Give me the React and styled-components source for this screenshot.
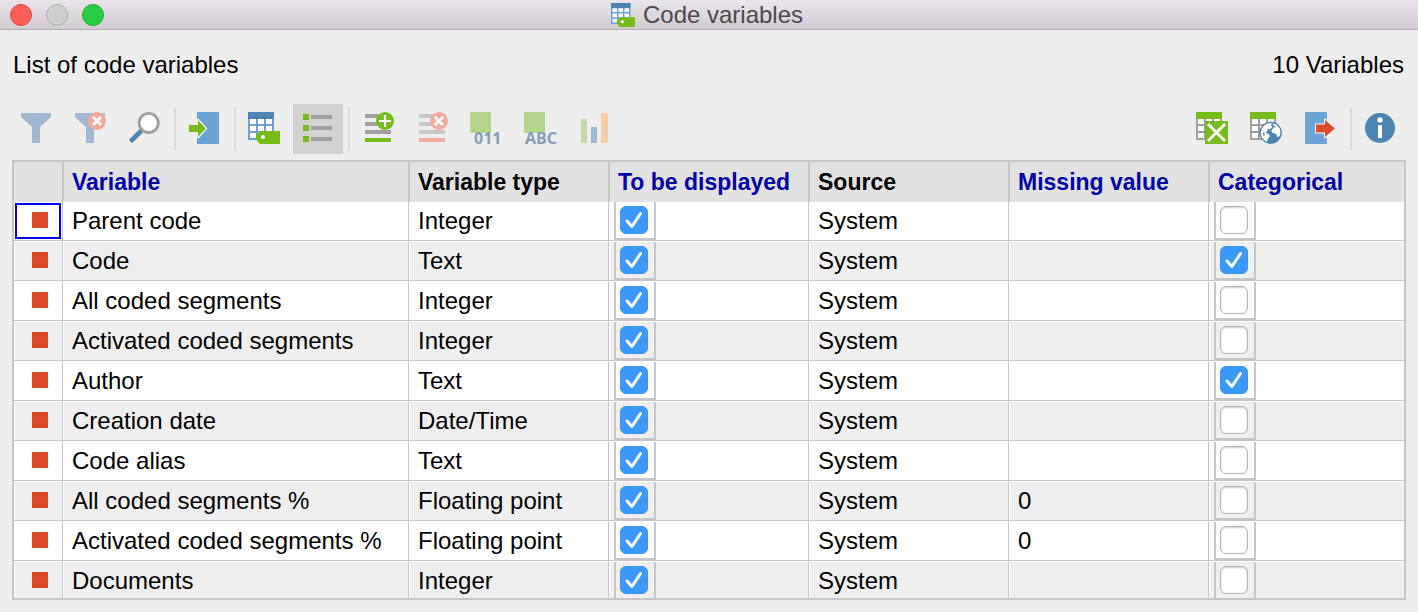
import React, { useState } from 'react'
import styled, { createGlobalStyle } from 'styled-components'

const columns = [
  { label: 'Variable', editable: true, width: 346 },
  { label: 'Variable type', width: 200 },
  { label: 'To be displayed', editable: true, width: 200 },
  { label: 'Source', width: 200 },
  { label: 'Missing value', editable: true, width: 200 },
  { label: 'Categorical', editable: true },
]

const initialRows = [
  { name: 'Parent code', type: 'Integer', displayed: true, missing: '', categorical: false },
  { name: 'Code', type: 'Text', displayed: true, missing: '', categorical: true },
  { name: 'All coded segments', type: 'Integer', displayed: true, missing: '', categorical: false },
  { name: 'Activated coded segments', type: 'Integer', displayed: true, missing: '', categorical: false },
  { name: 'Author', type: 'Text', displayed: true, missing: '', categorical: true },
  { name: 'Creation date', type: 'Date/Time', displayed: true, missing: '', categorical: false },
  { name: 'Code alias', type: 'Text', displayed: true, missing: '', categorical: false },
  { name: 'All coded segments %', type: 'Floating point', displayed: true, missing: '0', categorical: false },
  { name: 'Activated coded segments %', type: 'Floating point', displayed: true, missing: '0', categorical: false },
  { name: 'Documents', type: 'Integer', displayed: true, missing: '', categorical: false },
]

// the icons below are built at load time, so this one has to come first
const IconText = styled.text`
  font-family: "Open Sans", "Noto Sans", sans-serif;
  font-size: 16px;
  font-weight: 700;
  fill: #859fb8;
`

const cellX = [11, 19, 27]
const cellY = [15, 22, 29]

function Grid({ head, frame }) {
  return (
    <g>
      <rect x="9" y="8" width="26" height="28" fill={frame} />
      <rect x="9" y="8" width="26" height="7" fill={head} />
      {cellY.map((y) =>
        cellX.map((x) => <rect key={x + '-' + y} x={x} y={y} width="6" height="5" fill="#fff" />)
      )}
    </g>
  )
}

function TagTable() {
  return (
    <g>
      <Grid head="#4e84b2" frame="#6da2d6" />
      <path d="M21 27H41V40H21L18 37V36L17 35V32L18 30Z" fill="#77bc1b" />
      <circle cx="24" cy="33" r="2.1" fill="#fff" />
    </g>
  )
}

function RemoveBadge() {
  return (
    <g>
      <circle cx="32" cy="17" r="9" fill="#f2aa9c" />
      <path d="M28 13L36 21M36 13L28 21" stroke="#fff" strokeWidth="2.8" />
    </g>
  )
}

const icons = {
  filter: <path d="M10 9H40V13L29 23V39H21V23L10 13Z" fill="#a0b9d1" />,
  filterOff: (
    <g>
      <path d="M10 9H40V13L29 23V39H21V23L10 13Z" fill="#a0b9d1" />
      <RemoveBadge />
    </g>
  ),
  search: (
    <g>
      <path d="M22.5 26.5L11.5 37.5" stroke="#4e84b2" strokeWidth="4.6" />
      <circle cx="29.7" cy="19" r="9.6" fill="#fff" stroke="#9f9f9f" strokeWidth="2.8" />
    </g>
  ),
  importData: (
    <g>
      <rect x="18" y="8" width="22" height="32" fill="#6da2d6" />
      <path d="M18 20V15L19.5 14.5L28.3 24.5L19.5 34.5L18 33.5V29Z" fill="#fff" />
      <path d="M10 21H19V16L26.8 24.5L19 33V28H10Z" fill="#77bc1b" />
    </g>
  ),
  tagTable: <TagTable />,
  list: (
    <g>
      {[10, 21, 32].map((y) => (
        <g key={y}>
          <rect x="10" y={y} width="6" height="6" fill="#77bc1b" />
          <rect x="18" y={y + 1} width="21" height="4" fill="#9f9f9f" />
        </g>
      ))}
    </g>
  ),
  addRow: (
    <g>
      <path d="M12 12H38M12 20H38M12 28H38" stroke="#9f9f9f" strokeWidth="4" />
      <path d="M12 36H38" stroke="#77bc1b" strokeWidth="4" />
      <circle cx="32" cy="17" r="9" fill="#77bc1b" />
      <path d="M26 17H38M32 11V23" stroke="#fff" strokeWidth="2.2" />
    </g>
  ),
  removeRow: (
    <g>
      <path d="M12 12H38M12 20H38M12 28H38" stroke="#c8c8c8" strokeWidth="4" />
      <path d="M12 36H38" stroke="#f2aa9c" strokeWidth="4" />
      <RemoveBadge />
    </g>
  ),
  number: (
    <g>
      <rect x="9" y="8" width="21" height="21" fill="#b4d58b" />
      <IconText x="13" y="40">011</IconText>
    </g>
  ),
  text: (
    <g>
      <rect x="9" y="8" width="21" height="21" fill="#b4d58b" />
      <IconText x="10" y="40">ABC</IconText>
    </g>
  ),
  chart: (
    <g>
      <rect x="12" y="15" width="6" height="24" fill="#c3d9aa" />
      <rect x="22" y="23" width="6" height="16" fill="#a0b9d1" />
      <rect x="32" y="9" width="7" height="30" fill="#f8cda8" />
    </g>
  ),
  excel: (
    <g>
      <Grid head="#77bc1b" frame="#9f9f9f" />
      <rect x="18" y="17" width="23" height="23" fill="#77bc1b" />
      <path d="M21 20L38 37M38 20L21 37" stroke="#fff" strokeWidth="2.8" />
    </g>
  ),
  html: (
    <g>
      <Grid head="#77bc1b" frame="#9f9f9f" />
      <circle cx="29.7" cy="28.7" r="11" fill="#4e84b2" />
      <path d="M20.3 26C21.5 22.5 24.5 19.5 28.5 18.9L31 19.5L30 21.5L31.5 23L28.5 25.5L26.5 24.5L26.5 27L24.5 28.5L27.5 30L29 32L27 34.5L25.5 38C22 36.5 19.8 33 19.8 29.5Z" fill="#fff" />
      <path d="M31.5 19.5C35.5 19.8 38.5 22.5 39.7 26.5L39.5 31L37 33.5L34.5 29.5L31.5 29L30.3 26.5L32.5 23.5L35 23L32.5 21.5Z" fill="#fff" />
      <path d="M21.8 28.5L23.2 28L23.8 31L22.5 32Z" fill="#4e84b2" />
      <circle cx="29.7" cy="28.7" r="10.5" fill="none" stroke="#4e84b2" strokeWidth="1" />
    </g>
  ),
  exportData: (
    <g>
      <rect x="10" y="8" width="22" height="32" fill="#6da2d6" />
      <path d="M20 19.5H29V15L30.5 14.5L40.5 24.5L30.5 34.5L29 33.5V29.5H20Z" fill="#fff" />
      <path d="M21 20.5H30V16L40 24.5L30 33V28.5H21Z" fill="#e0492b" />
    </g>
  ),
  info: (
    <g>
      <circle cx="25" cy="24" r="15" fill="#4e84b2" />
      <circle cx="25" cy="16" r="2.7" fill="#fff" />
      <rect x="23" y="21" width="4" height="13" fill="#fff" />
    </g>
  ),
}

function Tool({ icon, label, active }) {
  return (
    <ToolButton type="button" aria-label={label} title={label} $active={active}>
      <svg width="50" height="50" viewBox="0 0 50 50">{icons[icon]}</svg>
    </ToolButton>
  )
}

function Check({ label, checked, onChange }) {
  return (
    <CheckFrame>
      <CheckInput type="checkbox" aria-label={label} checked={checked} onChange={onChange} />
      {checked && (
        <CheckMark viewBox="0 0 28 28">
          <path d="M7 15L12 20.5L20.5 7.5" />
        </CheckMark>
      )}
    </CheckFrame>
  )
}

function App() {
  const [rows, setRows] = useState(initialRows)

  const toggle = (index, key) => {
    setRows(rows.map((row, i) => (i === index ? { ...row, [key]: !row[key] } : row)))
  }

  return (
    <Window>
      <GlobalStyle />
      <TitleBar>
        <Lights>
          <Light type="button" aria-label="Close" $fill="#ff5f57" $edge="#e2463f" />
          <Light type="button" aria-label="Minimize" $fill="#cfcdcf" $edge="#b0aeb0" />
          <Light type="button" aria-label="Zoom" $fill="#28cd41" $edge="#1dad2b" />
        </Lights>
        <Title>
          <svg width="24" height="24" viewBox="9 8 32 32"><TagTable /></svg>
          Code variables
        </Title>
      </TitleBar>
      <Summary>
        <span>List of code variables</span>
        <span>10 Variables</span>
      </Summary>
      <Toolbar>
        <Tools>
          <Tool icon="filter" label="Filter" />
          <Tool icon="filterOff" label="Reset filters" />
          <Tool icon="search" label="Search" />
          <Separator />
          <Tool icon="importData" label="Import" />
          <Separator />
          <Tool icon="tagTable" label="Data editor" />
          <Tool icon="list" label="List of variables" active />
          <Separator />
          <Tool icon="addRow" label="New variable" />
          <Tool icon="removeRow" label="Delete variable" />
          <Tool icon="number" label="Transform into number" />
          <Tool icon="text" label="Transform into text" />
          <Tool icon="chart" label="Statistics" />
        </Tools>
        <Tools>
          <Tool icon="excel" label="Open as Excel table" />
          <Tool icon="html" label="Open as HTML table" />
          <Tool icon="exportData" label="Export" />
          <Separator />
          <Tool icon="info" label="Info" />
        </Tools>
      </Toolbar>
      <TableFrame>
        <Table>
          <colgroup>
            <col width="49" />
            {columns.map((c) => <col key={c.label} width={c.width} />)}
          </colgroup>
          <thead>
            <tr>
              <HeadCell aria-label="Marker" />
              {columns.map((c) => (
                <HeadCell key={c.label} scope="col" $editable={c.editable}>{c.label}</HeadCell>
              ))}
            </tr>
          </thead>
          <tbody>
            {rows.map((row, i) => (
              <Row key={row.name}>
                <Cell>
                  <Marker $selected={i === 0}><Square /></Marker>
                </Cell>
                <TextCell>{row.name}</TextCell>
                <TextCell>{row.type}</TextCell>
                <CheckCell>
                  <Check
                    label={'Display ' + row.name}
                    checked={row.displayed}
                    onChange={() => toggle(i, 'displayed')}
                  />
                </CheckCell>
                <TextCell>System</TextCell>
                <TextCell>{row.missing}</TextCell>
                <CheckCell>
                  <Check
                    label={row.name + ' is categorical'}
                    checked={row.categorical}
                    onChange={() => toggle(i, 'categorical')}
                  />
                </CheckCell>
              </Row>
            ))}
          </tbody>
        </Table>
      </TableFrame>
    </Window>
  )
}

export default App

const GlobalStyle = createGlobalStyle`
  * {
    box-sizing: border-box;
  }
  body {
    margin: 0;
    background: #eeeeee;
    color: #000;
    font-family: "Liberation Sans", Arial, sans-serif;
    font-size: 24px;
    line-height: 28px;
  }
`
const Window = styled.div`
  display: flex;
  flex-direction: column;
  min-height: 100vh;
  padding-bottom: 12px;
`
const TitleBar = styled.header`
  display: grid;
  grid-template-columns: 1fr auto 1fr;
  align-items: center;
  height: 30px;
  padding: 0 14px 0 10px;
  background: linear-gradient(#e9e5ea, #d1ccd2);
  border-bottom: 1px solid #b1adb2;
`
const Lights = styled.div`
  display: flex;
  gap: 14px;
`
const Light = styled.button`
  width: 22px;
  height: 22px;
  padding: 0;
  border: 1px solid ${(p) => p.$edge};
  border-radius: 50%;
  background: ${(p) => p.$fill};
`
const Title = styled.h1`
  display: flex;
  align-items: center;
  gap: 8px;
  margin: 0;
  font-size: 24px;
  font-weight: 400;
  line-height: 28px;
  color: #4d494e;
`
const Summary = styled.div`
  display: flex;
  justify-content: space-between;
  padding: 21px 14px 25px 13px;
`
const Toolbar = styled.div`
  display: flex;
  justify-content: space-between;
  padding: 0 13px 6px 11px;
`
const Tools = styled.div`
  display: flex;
  align-items: center;
  gap: 4px;
`
const ToolButton = styled.button`
  width: 50px;
  height: 50px;
  padding: 0;
  border: none;
  background: ${(p) => (p.$active ? '#d2d2d2' : 'transparent')};
  svg {
    display: block;
  }
`
const Separator = styled.span`
  width: 2px;
  height: 44px;
  margin: 0 -1px 0 1px;
  background: #dcdcdc;
`
const TableFrame = styled.div`
  margin: 0 12px;
  border: 2px solid #c6c6c6;
`
const Table = styled.table`
  width: 100%;
  table-layout: fixed;
  border-collapse: separate;
  border-spacing: 0;
`
const HeadCell = styled.th`
  height: 40px;
  padding: 0 0 0 9px;
  background: #e2e2e2;
  border-right: 1px solid #c6c6c6;
  color: ${(p) => (p.$editable ? '#0000a8' : '#000')};
  font-size: 23px;
  font-weight: 700;
  line-height: 40px;
  text-align: left;
  white-space: nowrap;
  & + & {
    box-shadow: inset 1px 0 #c6c6c6;
  }
  &:last-child {
    border-right: none;
  }
`
const Cell = styled.td`
  padding: 0;
  border-right: 1px solid #c6c6c6;
  border-bottom: 1px solid #c6c6c6;
  vertical-align: top;
  white-space: nowrap;
  &:last-child {
    border-right: none;
  }
`
const TextCell = styled(Cell)`
  padding: 2px 0 2px 9px;
  line-height: 34px;
`
const CheckCell = styled(Cell)`
  padding-left: 5px;
`
const Marker = styled.div`
  height: 36px;
  margin: 1px 1px 0;
  padding: 7px 15px;
  border: 2px solid ${(p) => (p.$selected ? '#0000f0' : 'transparent')};
`
const Square = styled.div`
  width: 16px;
  height: 16px;
  background: #df482b;
`
const CheckFrame = styled.label`
  display: grid;
  width: 42px;
  padding: 4px;
  border: 2px solid #c6c6c6;
  border-top: none;
`
const CheckInput = styled.input`
  grid-area: 1 / 1;
  appearance: none;
  width: 28px;
  height: 28px;
  margin: 0;
  border: 1px solid #b4b4b4;
  border-radius: 6px;
  background: #fff;
  box-shadow: inset 0 1px 2px #d0d0d0;
  &:checked {
    border-color: #3b93f2;
    background: #3b99fc;
    box-shadow: none;
  }
`
const CheckMark = styled.svg`
  grid-area: 1 / 1;
  width: 28px;
  height: 28px;
  pointer-events: none;
  fill: none;
  stroke: #fff;
  stroke-width: 3;
  stroke-linecap: round;
  stroke-linejoin: round;
`
const Row = styled.tr`
  background: #fff;
  &:nth-child(even) {
    background: #efefef;
  }
  & + & td {
    border-top: 1px solid #fff;
    box-shadow: inset 1px 0 #fff;
  }
  &:last-child td {
    border-bottom: none;
    padding-bottom: 0;
  }
  &:last-child ${Marker} {
    height: 35px;
    padding-bottom: 0;
  }
  &:last-child ${CheckFrame} {
    padding-bottom: 4px;
    border-bottom: none;
  }
`
